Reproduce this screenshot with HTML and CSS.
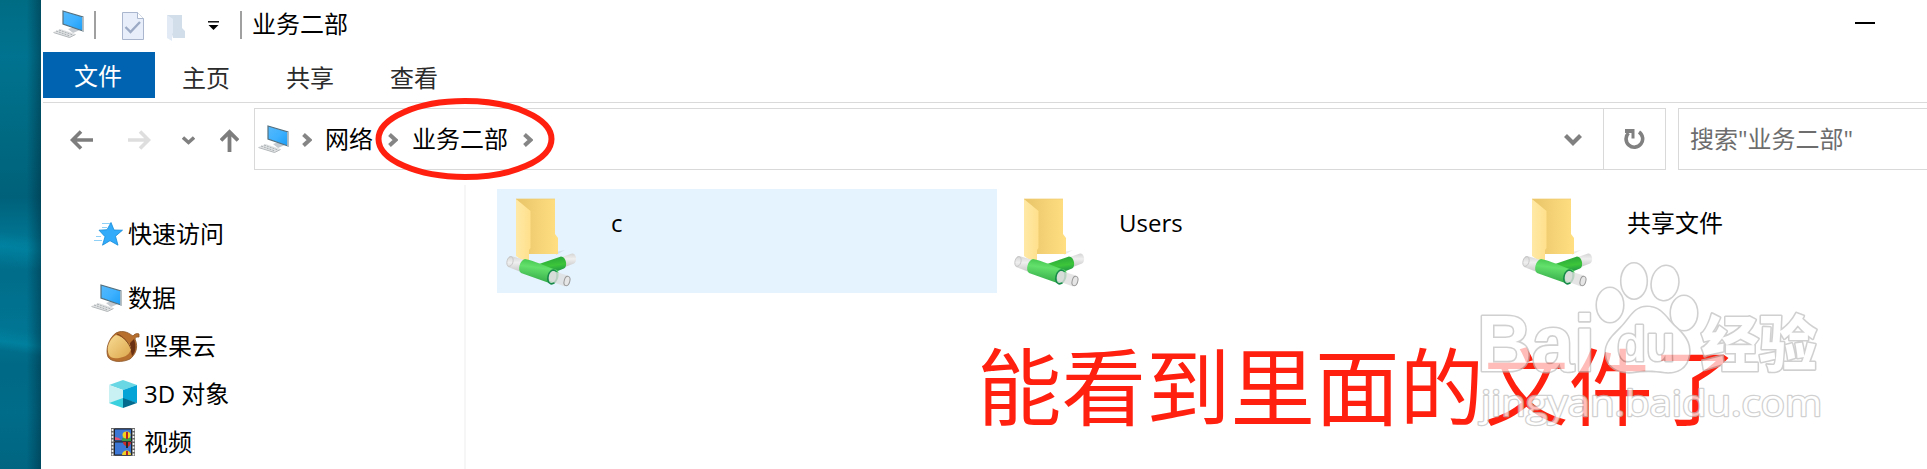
FILE: index.html
```html
<!DOCTYPE html>
<html lang="zh-CN">
<head>
<meta charset="utf-8">
<title>业务二部</title>
<link rel="stylesheet" href="styles.css">
</head>
<body>
<svg class="defs" width="0" height="0" aria-hidden="true">
  <defs>
    <linearGradient id="screen" x1="0" y1="0" x2="1" y2="1"><stop offset="0" stop-color="#55b9fb"/><stop offset=".5" stop-color="#3fb1ff"/><stop offset="1" stop-color="#1b9df5"/></linearGradient>
    <linearGradient id="foldBack" x1="0" y1="0" x2="1" y2="0"><stop offset="0" stop-color="#e9c468"/><stop offset="1" stop-color="#ffdf82"/></linearGradient>
    <linearGradient id="foldFront" x1="0" y1="0" x2="1" y2="0"><stop offset="0" stop-color="#ffe9a6"/><stop offset="1" stop-color="#ffe08c"/></linearGradient>
    <linearGradient id="pipe" x1=".6" y1="0" x2=".4" y2="1"><stop offset="0" stop-color="#3fc24a"/><stop offset=".35" stop-color="#63e06c"/><stop offset="1" stop-color="#2fa544"/></linearGradient>
    <linearGradient id="pipeB" x1=".4" y1="0" x2=".6" y2="1"><stop offset="0" stop-color="#26a33a"/><stop offset=".5" stop-color="#3dc53a"/><stop offset="1" stop-color="#11834a"/></linearGradient>
    <linearGradient id="tube" x1="0" y1="0" x2="0" y2="1"><stop offset="0" stop-color="#d4d4d4"/><stop offset=".4" stop-color="#efefef"/><stop offset="1" stop-color="#c8c8c8"/></linearGradient>
    <linearGradient id="nut" x1="0" y1="0" x2="1" y2="1"><stop offset="0" stop-color="#f8dc94"/><stop offset="1" stop-color="#dca64c"/></linearGradient>
    <symbol id="pc" viewBox="0 0 31 28">
      <path d="M15 19l6-2 6 3-7 3z" fill="#c4cacf"/>
      <path d="M10 1l20 6v14l-20-7z" fill="url(#screen)" stroke="#54707f" stroke-width="1.2"/>
      <path d="M30 7v14" stroke="#c5c8ca" stroke-width="1.500"/>
      <path d="M.5 22l7-3 15 5-6 3.500z" fill="#e0e2e3"/>
      <path d="M3 21l14 5M6 20l14 5" stroke="#a9afb2" stroke-width="1" stroke-dasharray="2 1"/>
      <path d="M.5 22.500l16 5 6-3" fill="none" stroke="#b2b6b8" stroke-width="1"/>
    </symbol>
    <symbol id="crumb" viewBox="0 0 10 14"><path d="M1.500 1.500L7.500 7l-6 5.500" fill="none" stroke="#858585" stroke-width="4"/></symbol>
    <symbol id="share" viewBox="0 0 74 90">
      <path d="M51 54l9-2-9 5z" fill="#000" opacity=".08"/>
      <path d="M11 1h39v35l3 4v16H24L11 1z" fill="url(#foldBack)"/>
      <path d="M11 1l14.500 12v37l-1.500 2v12l-3 1-10-7z" fill="url(#foldFront)"/>
      <path d="M11 1h39" stroke="#efcb70" stroke-width=".7"/>
      <path d="M6 58l14 4-4 12-13-5c-3-2-1-11 3-11z" fill="url(#tube)"/>
      <ellipse cx="5" cy="63.500" rx="3" ry="5" fill="none" stroke="#c2c2c2" stroke-width=".8" transform="rotate(15 5 63.500)"/>
      <path d="M57 59l10-3.500c4-1 6 8 2 10l-9 3.500z" fill="url(#tube)"/>
      <path d="M34 66l22-7.500c5 0 7 10 3 12l-15 6z" fill="url(#pipeB)"/>
      <path d="M20 61c8 1 22 8 32 11 4 3 1 14-5 14L16 75c-4-3-1-13 4-14z" fill="url(#pipe)"/>
      <ellipse cx="47.500" cy="79" rx="4.500" ry="7" fill="#b9d6c0" stroke="#178b49" stroke-width="1.600" transform="rotate(15 47.500 79)"/>
      <path d="M48 73l15 4.500c3 2 1 10-3 11L45 83c-2-3-1-9 3-10z" fill="#dedede" opacity=".8"/>
      <ellipse cx="62" cy="83" rx="2.800" ry="4.800" fill="#e6e6e6" stroke="#999" stroke-width="1" transform="rotate(15 62 83)"/>
    </symbol>
  </defs>
</svg>

<div class="desktop">
  <div class="wallpaper"></div>
  <main class="window">
    <header class="titlebar">
      <svg class="title-pc"><use href="#pc"/></svg>
      <span class="bar"></span>
      <svg class="qa-check" viewBox="0 0 22 28"><path d="M.5.5h15l6 6v21H.5z" fill="#e8effb" stroke="#a9b6cd"/><path d="M15.500.5v6h6" fill="#fff" stroke="#a9b6cd"/><path d="M3.500 15l5 5 9.500-10" fill="none" stroke="#9caac5" stroke-width="2.400"/></svg>
      <svg class="qa-folder" viewBox="0 0 20 28"><path d="M1 1h15v13l3 3v7H7z" fill="#d3deeb"/><path d="M1 1l6 4v14l-1 1v7l-5-3z" fill="#e2ebf5"/></svg>
      <svg class="qa-more" viewBox="0 0 11 9"><path d="M0 .8h11" stroke="#000" stroke-width="1.400"/><path d="M.5 4h10l-5 5z"/></svg>
      <span class="bar"></span>
      <h1 class="title">业务二部</h1>
      <span class="minimize"></span>
    </header>
    <nav class="tabs">
      <span class="tab tab-file">文件</span>
      <span class="tab">主页</span>
      <span class="tab">共享</span>
      <span class="tab">查看</span>
    </nav>
    <section class="navrow">
      <div class="arrows">
        <svg width="23" height="20" viewBox="0 0 23 20"><path d="M23 10H3M11 1.500L2.500 10l8.500 8.500" fill="none" stroke="#7d7d7d" stroke-width="3.600"/></svg>
        <svg class="forward" width="23" height="20" viewBox="0 0 23 20"><path d="M0 10h20M12 1.500l8.500 8.500-8.500 8.500" fill="none" stroke="#dedede" stroke-width="3.600"/></svg>
        <svg class="recent" width="13" height="9" viewBox="0 0 13 9"><path d="M1 1.500l5.500 5 5.500-5" fill="none" stroke="#808080" stroke-width="3.400"/></svg>
        <svg class="up" width="19" height="23" viewBox="0 0 19 23"><path d="M9.500 23V3M1 11.500L9.500 3l8.500 8.500" fill="none" stroke="#7d7d7d" stroke-width="3.800"/></svg>
      </div>
      <div class="address">
        <svg class="addr-pc"><use href="#pc"/></svg>
        <svg class="crumb crumb-a"><use href="#crumb"/></svg>
        <span class="place">网络</span>
        <svg class="crumb crumb-b"><use href="#crumb"/></svg>
        <span class="place">业务二部</span>
        <svg class="crumb crumb-c"><use href="#crumb"/></svg>
        <svg class="drop" viewBox="0 0 18 12"><path d="M1.500 1.500L9 9l7.500-7.500" fill="none" stroke="#808080" stroke-width="4.200"/></svg>
        <div class="refresh"><svg width="21" height="22" viewBox="0 0 21 22"><path d="M15 4a8.300 8.300 0 1 1-10.500 1" fill="none" stroke="#808080" stroke-width="3.600"/><path d="M1 1h9.500v9.500H7.500V5H1z" fill="#808080"/></svg></div>
      </div>
      <div class="search">搜索"业务二部"</div>
    </section>
    <div class="body">
      <aside class="sidebar">
        <div class="item item-quick"><svg width="32" height="24" viewBox="0 0 32 24"><path d="M20 .5l3 7.500 8.500.2-7 6 2.500 9-8-4.500-7.500 4.500 2.500-8.500-6-6.500 8-.5z" fill="#32abfb" stroke="#158bd8" stroke-width=".8"/><path d="M11 1.500h8M11 5.500h5M5 14.500h5M3 18.500h8" stroke="#8fd0f7" stroke-width="1.100"/></svg><span>快速访问</span></div>
        <div class="item item-data"><svg width="31" height="28"><use href="#pc"/></svg><span>数据</span></div>
        <div class="item child"><svg width="34" height="31" viewBox="0 0 34 31"><path d="M10 2c8-4 14 1 17 3 1-2 4-3 6-2v3c-2 0-4 0-4 2 4 9 0 16-5 20-8 4-19 3-22-2C-1 18 3 7 10 2z" fill="#b8702f" stroke="#8a5426" stroke-width=".8"/><path d="M24 12c3-3 4-4 4-4 3 8 1 14-2 17-1-4-2-9-2-13z" fill="#6a3113"/><path d="M10 4c7 1 16 10 15 14-1 4-4 7-8 8-6 2-12 2-14-2C-.5 17 4 7 10 4z" fill="url(#nut)"/><path d="M11 3c6 2 12 9 14 15" fill="none" stroke="#7b421c" stroke-width="1"/></svg><span>坚果云</span></div>
        <div class="item child"><svg width="34" height="30" viewBox="0 0 34 30"><path d="M3 6l14-5 14 5-14 5z" fill="#69d8e4"/><path d="M3 6l14 5v9L3 24z" fill="#c9f1f3"/><path d="M17 11l14-5v18l-14-4z" fill="#05a4d7"/><path d="M3 24l14-5v10z" fill="#3ad0dd"/><path d="M17 19l14 5-14 5z" fill="#036b8e"/></svg><span>3D 对象</span></div>
        <div class="item child"><svg width="34" height="28" viewBox="0 0 34 28"><path d="M5 0h24v28H5z" fill="#6c6c6c"/><path d="M6.500 1v27M27.500 1v27" stroke="#f2f2f2" stroke-width="1.700" stroke-dasharray="2 1.500"/><path d="M8.500 1h17v12h-17zM8.500 14h17v13h-17z" fill="#3d77d5" stroke="#1d2430"/><path d="M9 9l4 1 2 2H9z" fill="#e35273"/><path d="M16 10h9v3h-9z" fill="#3c9b45"/><ellipse cx="20.500" cy="7" rx="4" ry="3.500" fill="#f3d21c"/><path d="M20 4h2v7h-2z" fill="#b92222"/><path d="M17 14h8c0 3-2 4-3 5-2-1-5-2-5-5z" fill="#cc2d2a"/><path d="M20 14h2v6h-2z" fill="#282828"/><path d="M16 27c0-6 9-6 9 0z" fill="#efd027"/><path d="M20 23h2v4h-2z" fill="#b92222"/></svg><span>视频</span></div>
      </aside>
      <div class="files">
        <div class="file selected"><svg class="share"><use href="#share"/></svg><span>c</span></div>
        <div class="file"><svg class="share"><use href="#share"/></svg><span>Users</span></div>
        <div class="file"><svg class="share"><use href="#share"/></svg><span>共享文件</span></div>
      </div>
    </div>
  </main>
  <svg class="circle" viewBox="0 0 182 86"><ellipse cx="91" cy="43" rx="86.500" ry="38" fill="none" stroke="#ff2010" stroke-width="6"/></svg>
  <p class="note">能看到里面的文件了</p>
  <svg class="watermark" viewBox="0 0 360 190">
    <g class="mark">
      <text class="mark-bai" x="7" y="117" textLength="118" lengthAdjust="spacingAndGlyphs">Bai</text>
      <ellipse cx="140" cy="51" rx="13" ry="17"/>
      <ellipse cx="164" cy="27" rx="12.500" ry="17.500"/>
      <ellipse cx="195" cy="29" rx="13" ry="17" transform="rotate(10 195 29)"/>
      <ellipse cx="214" cy="59" rx="13" ry="17"/>
      <path d="M177 53c14 0 18 10 27 19 10 9 16 16 15 28-2 15-13 19-24 18-12-2-22-2-33 0-14 1-25-5-26-18-1-11 7-18 15-26 9-9 13-21 26-21z"/>
      <text class="mark-du" x="147" y="107" textLength="58" lengthAdjust="spacingAndGlyphs">du</text>
      <text class="mark-cn" x="231" y="112" textLength="116" lengthAdjust="spacingAndGlyphs">经验</text>
      <text class="mark-url" x="11" y="162" textLength="341" lengthAdjust="spacingAndGlyphs">jingyan.baidu.com</text>
    </g>
  </svg>
</div>
</body>
</html>
```
FILE: styles.css
```css
* { box-sizing: border-box; }
body {
  margin: 0;
  font-family: "Open Sans", "Noto Sans CJK SC", sans-serif;
  font-size: 24px;
  line-height: 36px;
  color: #000;
  overflow: hidden;
}
svg { display: block; flex: none; }
.defs { position: absolute; }
.desktop { position: relative; display: flex; width: 1927px; height: 469px; overflow: hidden; background: #fff; }
.wallpaper {
  flex: none;
  width: 41px;
  background:
    linear-gradient(90deg, transparent 65%, rgba(0, 30, 45, .4)),
    linear-gradient(188deg, transparent 50%, rgba(0, 160, 190, .25) 53%, transparent 57%, transparent 70%, rgba(0, 160, 190, .35) 73%, transparent 75%),
    linear-gradient(180deg, #006c84 0, #007390 12%, #006a83 28%, #00617a 42%, #007896 52%, #006d8a 58%, #007593 70%, #006985 78%, #006c89 88%, #006581 100%);
}
.window { flex: 1; min-width: 0; display: flex; flex-direction: column; background: #fff; }

.titlebar { display: flex; align-items: center; height: 52px; padding: 0 52px 4px 12px; }
.title-pc { width: 31px; height: 28px; margin-right: 10px; }
.bar { width: 2px; height: 28px; background: #a0a0a0; margin-top: 2px; }
.qa-check { width: 22px; height: 28px; margin: 4px 0 0 26px; }
.qa-folder { width: 20px; height: 28px; margin: 7px 0 0 22px; }
.qa-more { width: 11px; height: 9px; margin: 3px 21px 0 22px; }
.title { margin: 0 auto 0 10px; font-size: 24px; font-weight: 400; }
.minimize { width: 20px; height: 2px; background: #000; margin-top: -2px; }

.tabs { display: flex; height: 51px; margin-left: 2px; border-bottom: 1px solid #dadada; }
.tab { width: 104px; height: 46px; padding: 8px 2px 0 0; text-align: center; color: #2b2b2b; }
.tab-file { width: 112px; padding-top: 6px; background: #0063b1; color: #fff; }

.navrow { display: flex; height: 82px; padding-top: 5px; }
.arrows { display: flex; align-items: center; width: 213px; height: 62px; padding: 2px 0 0 29px; }
.forward { margin-left: 35px; }
.recent { margin-left: 31px; }
.up { margin-left: 25px; }
.address { display: flex; align-items: center; width: 1412px; height: 62px; border: 1px solid #d9d9d9; padding-left: 3px; }
.addr-pc { width: 31px; height: 28px; }
.crumb { width: 10px; height: 14px; }
.crumb-a { margin: 1px 13px 0 13px; }
.crumb-b { margin: 1px 14px 0 15px; }
.crumb-c { margin: 1px 0 0 15px; }
.place { height: 36px; }
.drop { width: 18px; height: 12px; margin: 2px 21px 0 auto; }
.refresh { display: flex; align-items: center; justify-content: center; width: 62px; height: 60px; border-left: 1px solid #d9d9d9; }
.search { flex: 1; height: 62px; margin-left: 12px; padding: 12px 11px; border: 1px solid #d9d9d9; border-right: 0; color: #6d6d6d; white-space: nowrap; }

.body { display: flex; flex: 1; min-height: 0; }
.sidebar { flex: none; width: 425px; padding: 25px 0 0 50px; border-right: 2px solid #f6f6f6; }
.item { display: flex; align-items: center; height: 48px; }
.item svg { margin-right: 5px; }
.item-data { margin-top: 16px; }
.item-data svg { margin-right: 6px; }
.child { padding-left: 15px; }
.child svg { margin-right: 4px; }
.files { display: flex; gap: 8px; flex: 1; min-width: 0; padding: 4px 0 0 31px; }
.file { display: flex; flex: none; width: 500px; height: 104px; padding: 9px 0 0 8px; }
.file span { margin: 7px 0 0 32px; }
.selected { background: #e5f3ff; }
.share { width: 74px; height: 90px; }

.circle { position: absolute; left: 374px; top: 96px; width: 182px; height: 86px; }
.note {
  position: absolute; left: 977px; top: 322px; margin: 0;
  font-family: "Noto Sans CJK SC", sans-serif;
  font-size: 84.5px; line-height: 120px; color: #ff2010; white-space: nowrap;
}
.watermark { position: absolute; left: 1470px; top: 254px; width: 360px; height: 190px; overflow: visible; }
.mark { fill: #fff; stroke: #bdbdbd; stroke-width: 3.2px; stroke-linejoin: round; paint-order: stroke; opacity: .7; }
.mark-bai { font: bold 80px "Liberation Sans", sans-serif; }
.mark-du { font: bold 50px "Liberation Sans", sans-serif; }
.mark-cn { font: 900 60px "Noto Sans CJK SC", sans-serif; }
.mark-url { font: 36px "Open Sans", sans-serif; stroke-width: 2.4px; }
```
